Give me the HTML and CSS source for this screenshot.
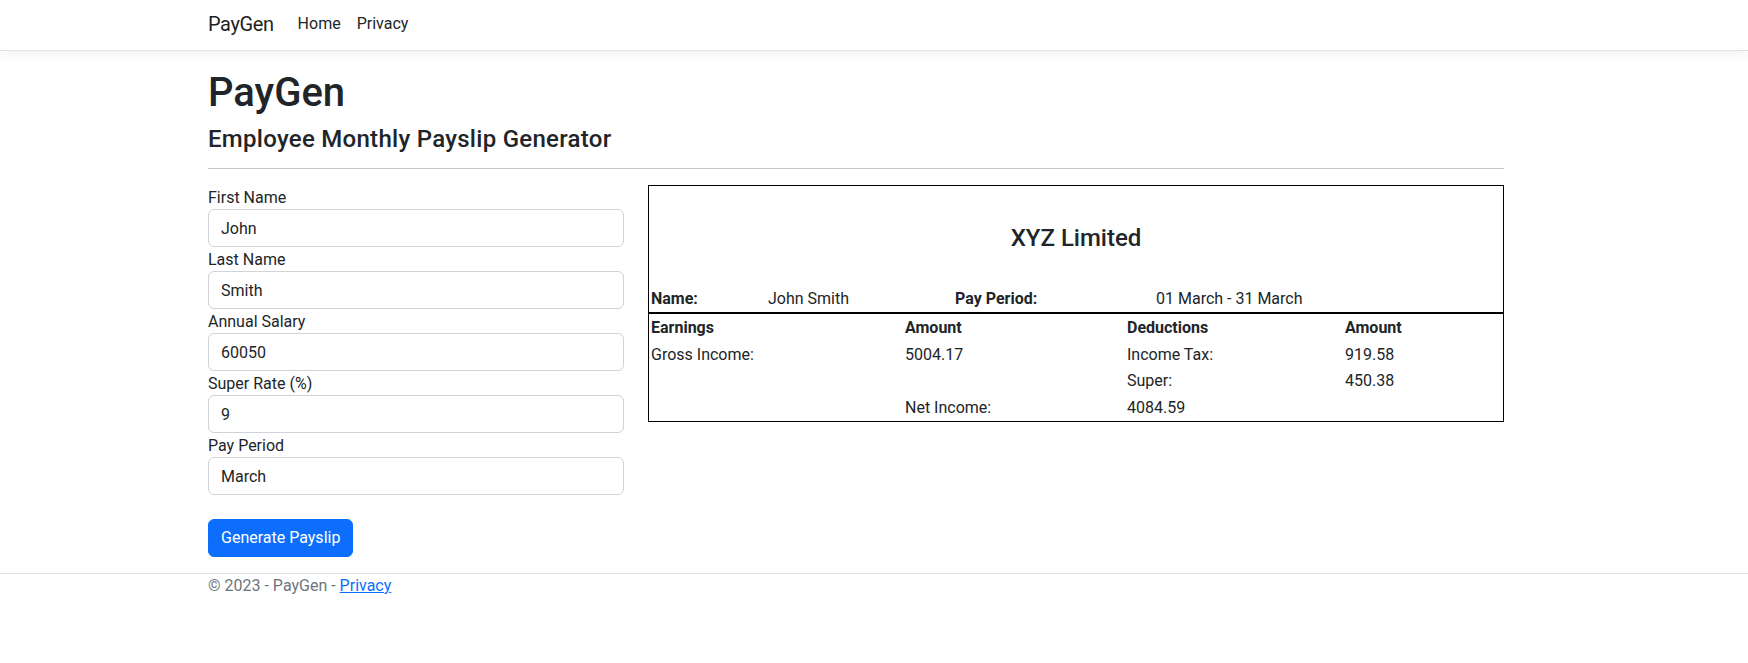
FILE: index.html
```html
<!DOCTYPE html>
<html lang="en">
<head>
<meta charset="utf-8">
<title>PayGen</title>
<link rel="stylesheet" href="styles.css">
</head>
<body>
<header class="navbar">
  <div class="container nav-inner">
    <a class="brand" href="#">PayGen</a>
    <nav class="nav-links">
      <a class="nav-link" href="#">Home</a>
      <a class="nav-link" href="#">Privacy</a>
    </nav>
  </div>
</header>
<main class="container main">
  <h1 class="title">PayGen</h1>
  <h4 class="subtitle">Employee Monthly Payslip Generator</h4>
  <hr class="divider">
  <div class="row">
    <form class="form">
      <div class="group">
        <label class="label" for="fn">First Name</label>
        <input class="input" id="fn" type="text" value="John">
      </div>
      <div class="group">
        <label class="label" for="ln">Last Name</label>
        <input class="input" id="ln" type="text" value="Smith">
      </div>
      <div class="group">
        <label class="label" for="sal">Annual Salary</label>
        <input class="input" id="sal" type="text" value="60050">
      </div>
      <div class="group">
        <label class="label" for="sr">Super Rate (%)</label>
        <input class="input" id="sr" type="text" value="9">
      </div>
      <div class="group">
        <label class="label" for="pp">Pay Period</label>
        <input class="input" id="pp" type="text" value="March">
      </div>
      <button class="btn" type="button">Generate Payslip</button>
    </form>
    <section class="payslip">
      <div class="company"><span class="company-name">XYZ Limited</span></div>
      <div class="info-row">
        <span class="cell bold">Name:</span>
        <span class="cell">John Smith</span>
        <span class="cell bold">Pay Period:</span>
        <span class="cell">01 March - 31 March</span>
      </div>
      <div class="amounts">
        <span class="cell bold">Earnings</span>
        <span class="cell bold">Amount</span>
        <span class="cell bold">Deductions</span>
        <span class="cell bold">Amount</span>

        <span class="cell">Gross Income:</span>
        <span class="cell">5004.17</span>
        <span class="cell">Income Tax:</span>
        <span class="cell">919.58</span>

        <span class="cell"></span>
        <span class="cell"></span>
        <span class="cell">Super:</span>
        <span class="cell">450.38</span>

        <span class="cell"></span>
        <span class="cell">Net Income:</span>
        <span class="cell">4084.59</span>
        <span class="cell"></span>
      </div>
    </section>
  </div>
</main>
<footer class="footer">
  <div class="container footer-inner">© 2023 - PayGen - <a class="footer-link" href="#">Privacy</a></div>
</footer>
</body>
</html>
```
FILE: styles.css
```css
* { box-sizing: border-box; }

html, body {
  margin: 0;
  padding: 0;
}

body {
  font-family: Roboto, "Liberation Sans", sans-serif;
  font-size: 16px;
  line-height: 1.5;
  color: #212529;
  background: #fff;
}

.container {
  width: 1320px;
  margin-left: calc(50% - 678px);
  padding: 0 12px;
}

/* Navbar */
.navbar {
  height: 51px;
  border-bottom: 1px solid #e1e1e1;
  box-shadow: 0 4px 12px rgba(0, 0, 0, 0.05);
  margin-bottom: 16px;
  background: #fff;
}

.nav-inner {
  display: flex;
  align-items: center;
  height: 50px;
  padding-bottom: 3px;
}

.brand {
  font-size: 20px;
  line-height: 30px;
  letter-spacing: -0.4px;
  color: rgba(0, 0, 0, 0.9);
  text-decoration: none;
  margin-right: 16px;
}

.nav-links {
  display: flex;
}

.nav-link {
  color: #212529;
  text-decoration: none;
  padding: 0 8px;
  line-height: 24px;
}

/* Main */
.main {
  padding-bottom: 16px;
}

.title {
  font-size: 40px;
  font-weight: 500;
  line-height: 48px;
  margin: 0 0 6px;
  padding-top: 2px;
}

.subtitle {
  font-size: 24px;
  font-weight: 500;
  line-height: 28.8px;
  letter-spacing: 0.28px;
  margin: 0 0 14px;
  padding-top: 2px;
}

.divider {
  border: 0;
  border-top: 1px solid #212529;
  opacity: 0.25;
  margin: 0 0 16px;
}

.row {
  display: grid;
  grid-template-columns: 416px 856px;
  column-gap: 24px;
  align-items: start;
}

/* Form */
.form {
  display: flex;
  flex-direction: column;
}

.group {
  display: flex;
  flex-direction: column;
}

.label {
  line-height: 24px;
  padding-top: 1px;
  margin-bottom: -1px;
}

.input {
  display: block;
  width: 100%;
  height: 38px;
  padding: 7px 12px 5px;
  font-family: inherit;
  font-size: 16px;
  line-height: 24px;
  color: #212529;
  background: #fff;
  border: 1px solid #ced4da;
  border-radius: 6px;
  outline: none;
}

.btn {
  align-self: flex-start;
  margin-top: 24px;
  height: 38px;
  padding: 6px 12px;
  font-family: inherit;
  font-size: 16px;
  line-height: 24px;
  color: #fff;
  background: #0d6efd;
  border: 1px solid #0d6efd;
  border-radius: 6px;
  cursor: pointer;
}

/* Payslip */
.payslip {
  border: 1px solid #000;
}

.company {
  height: 100px;
  padding-top: 5px;
  display: flex;
  align-items: center;
  justify-content: center;
}

.company-name {
  font-size: 24px;
  font-weight: 500;
  line-height: 28.8px;
}

.info-row {
  display: grid;
  grid-template-columns: 117px 187px 201px 1fr;
  height: 28px;
  padding: 1px 0 1px 2px;
  border-bottom: 2px solid #000;
}

.amounts {
  display: grid;
  grid-template-columns: 254px 222px 218px 1fr;
  grid-auto-rows: 26px;
  row-gap: 0.8px;
  padding: 1px 0 0 2px;
}

.cell {
  line-height: 24px;
  padding: 1px 0;
  white-space: nowrap;
}

.info-row .cell {
  padding: 0;
}

.bold {
  font-weight: 700;
}

/* Footer */
.footer {
  border-top: 1px solid #e1e1e1;
  color: #6c757d;
}

.footer-inner {
  line-height: 24px;
}

.footer-link {
  color: #0d6efd;
}
```
